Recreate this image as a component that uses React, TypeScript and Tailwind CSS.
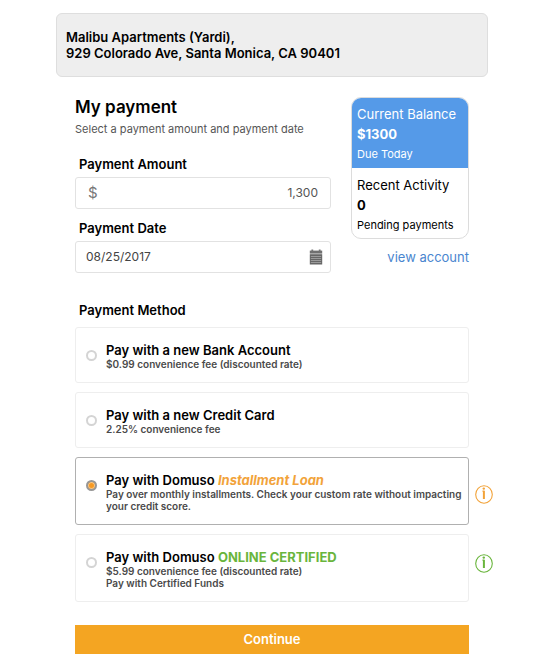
import { useState } from "react";
import type { ReactNode } from "react";
import clsx from "clsx";

interface PaymentMethod {
  id: string;
  title: ReactNode;
  details: string[];
  info?: { label: string; className: string };
}

const METHODS: PaymentMethod[] = [
  {
    id: "bank",
    title: "Pay with a new Bank Account",
    details: ["$0.99 convenience fee (discounted rate)"],
  },
  {
    id: "card",
    title: "Pay with a new Credit Card",
    details: ["2.25% convenience fee"],
  },
  {
    id: "loan",
    title: (
      <>
        Pay with Domuso <em className="font-bold text-[#f2a33a]">Installment Loan</em>
      </>
    ),
    details: [
      "Pay over monthly installments. Check your custom rate without impacting your credit score.",
    ],
    info: { label: "About installment loans", className: "mt-7 text-[#f2a33a]" },
  },
  {
    id: "certified",
    title: (
      <>
        Pay with Domuso <span className="font-bold text-[#69b53c]">ONLINE CERTIFIED</span>
      </>
    ),
    details: ["$5.99 convenience fee (discounted rate)", "Pay with Certified Funds"],
    info: { label: "About certified funds", className: "mt-5 text-[#69b53c]" },
  },
];

function CalendarIcon() {
  return (
    <svg width="14" height="16" viewBox="0 0 14 16" aria-hidden="true">
      <path d="M2.4 0.4h1.8v2h-1.8zM9.8 0.4h1.8v2h-1.8z" fill="#7a7a7a" />
      <rect x="0.8" y="1.6" width="12.4" height="3" fill="#707070" />
      <rect x="0.8" y="5.2" width="12.4" height="10.3" fill="#666666" />
      <path d="M1.8 7.5h10.4M1.8 9.5h10.4M1.8 11.5h10.4M1.8 13.5h10.4" stroke="#b0b0b0" strokeWidth="0.7" />
    </svg>
  );
}

function InfoIcon() {
  return (
    <svg width="18" height="19" viewBox="0 0 18 19" fill="none" stroke="currentColor" aria-hidden="true">
      <ellipse cx="9" cy="9.5" rx="8.3" ry="8.8" strokeWidth="1.1" />
      <circle cx="8.8" cy="3.6" r="1.2" fill="currentColor" stroke="none" />
      <path d="M7.2 6.1h1.6" strokeWidth="0.8" />
      <path d="M8.9 5.7v8.3" strokeWidth="2" />
    </svg>
  );
}

function BalanceCard() {
  return (
    <aside className="w-[118px] shrink-0">
      <div className="overflow-hidden rounded-[10px] border border-[#dcdcdc] bg-white">
        <div className="-mx-px -mt-px bg-[#559ae8] px-1.5 pt-[7px] pb-1 leading-5 text-white">
          <p className="text-[13px]">Current Balance</p>
          <p className="text-[13px] font-bold">$1300</p>
          <p className="text-[11px] leading-5">Due Today</p>
        </div>
        <div className="px-[5px] pt-[7px] pb-[3px] leading-5">
          <p className="text-[13px]">Recent Activity</p>
          <p className="text-[13px] font-bold">0</p>
          <p className="text-[11px] leading-5">Pending payments</p>
        </div>
      </div>
      <a href="#account" className="mt-2 block text-right text-[13px] leading-5 text-[#4a86cf]">
        view account
      </a>
    </aside>
  );
}

export default function App() {
  const [amount, setAmount] = useState("1,300");
  const [date, setDate] = useState("08/25/2017");
  const [method, setMethod] = useState("loan");

  return (
    <main className="mx-auto max-w-xl px-14 pt-[13px] pb-4 font-['Inter',sans-serif] text-black">
      <header className="rounded-md border border-[#dedede] bg-[#eeeeee] px-[9px] py-[15px] text-[13px] leading-4 font-semibold">
        <p>Malibu Apartments (Yardi),</p>
        <p>929 Colorado Ave, Santa Monica, CA 90401</p>
      </header>

      <form className="px-[19px] pt-5" onSubmit={(e) => e.preventDefault()}>
        <div className="flex gap-5">
          <section className="min-w-0 flex-1">
            <h1 className="text-[17px] leading-5 font-semibold">My payment</h1>
            <p className="mt-1 text-[11px] leading-4 text-[#555]">
              Select a payment amount and payment date
            </p>

            <label htmlFor="amount" className="mt-[19px] block pl-1 text-[13px] leading-4 font-semibold">
              Payment Amount
            </label>
            <div className="mt-[5px] flex h-8 items-center rounded-[3px] border border-[#e2e2e2] px-3">
              <span className="text-[15px] leading-4 text-[#777]">$</span>
              <input
                id="amount"
                value={amount}
                onChange={(e) => setAmount(e.target.value)}
                className="min-w-0 flex-1 text-right text-[12px] text-[#555] outline-none"
              />
            </div>

            <label htmlFor="date" className="mt-[11px] block pl-1 text-[13px] leading-4 font-semibold">
              Payment Date
            </label>
            <div className="mt-[5px] flex h-8 items-center rounded-[3px] border border-[#e2e2e2] pr-[7px] pl-2.5">
              <input
                id="date"
                value={date}
                onChange={(e) => setDate(e.target.value)}
                className="min-w-0 flex-1 text-[12px] text-[#444] outline-none"
              />
              <button type="button" aria-label="Open calendar">
                <CalendarIcon />
              </button>
            </div>
          </section>

          <BalanceCard />
        </div>

        <fieldset className="mt-[29px]">
          <legend className="pl-1 text-[13px] leading-4 font-semibold">Payment Method</legend>
          <div className="mt-[9px] -mr-6 space-y-[9px]">
            {METHODS.map((m) => (
              <div key={m.id} className="flex gap-1.5">
                <label
                  className={clsx(
                    "flex flex-1 items-start gap-[9px] rounded-[3px] border pt-3.5 pr-1 pb-3 pl-2.5",
                    method === m.id ? "border-[#b0b0b0]" : "border-[#eeeeee]"
                  )}
                >
                  <input
                    type="radio"
                    name="method"
                    value={m.id}
                    checked={method === m.id}
                    onChange={() => setMethod(m.id)}
                    className="mt-2 size-[11px] shrink-0 appearance-none rounded-full border-2 border-[#d4d4d4] bg-white checked:border-[#979797] checked:bg-[#f79a22] checked:inset-ring checked:inset-ring-[#f9c98c]"
                  />
                  <span className="min-w-0 flex-1">
                    <span className="block text-[13px] leading-4 font-semibold">{m.title}</span>
                    {m.details.map((line) => (
                      <span key={line} className="block text-[10px] leading-3 font-semibold text-[#4a4a4a]">
                        {line}
                      </span>
                    ))}
                  </span>
                </label>
                <div className="w-[18px] shrink-0">
                  {m.info && (
                    <button type="button" aria-label={m.info.label} className={clsx("block", m.info.className)}>
                      <InfoIcon />
                    </button>
                  )}
                </div>
              </div>
            ))}
          </div>
        </fieldset>

        <button
          type="submit"
          className="mt-[23px] block h-[29px] w-full bg-[#f4a522] text-[13px] font-semibold text-white"
        >
          Continue
        </button>
      </form>
    </main>
  );
}
